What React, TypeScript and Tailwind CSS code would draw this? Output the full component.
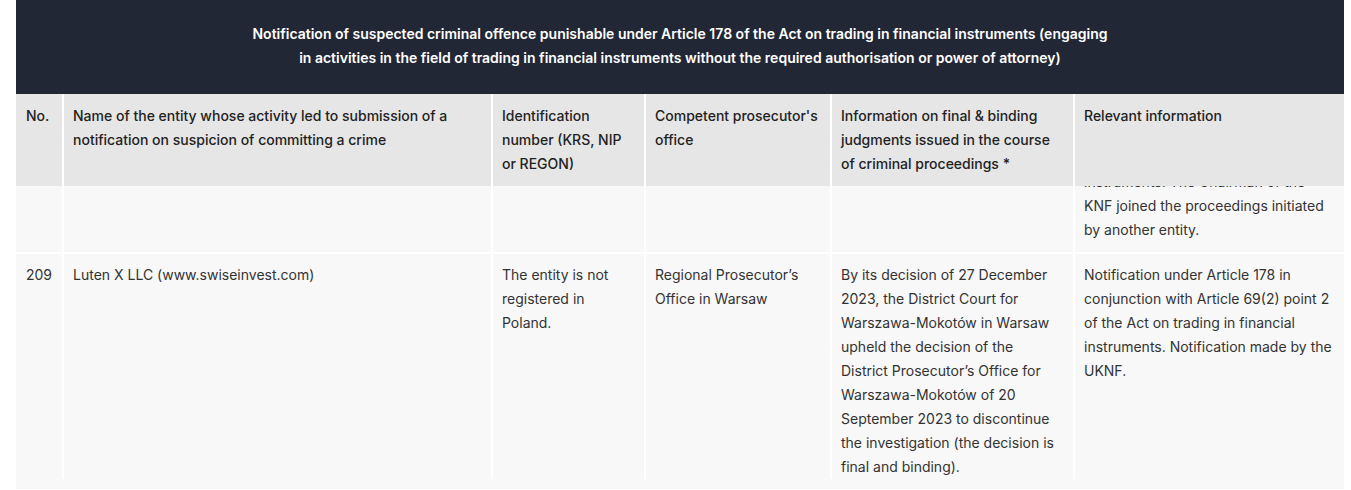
import React from "react";

const cols = ["w-[46px]", "w-[429px]", "w-[153px]", "w-[186px]", "w-[243px]", "w-[271px]"];

function Cell({ i, children, className = "" }: { i: number; children?: React.ReactNode; className?: string }) {
  return (
    <div
      className={`${cols[i]} shrink-0 ${i === 0 ? "pl-[10px]" : "border-l-2 border-white pl-[9px]"} pr-[10px] ${className}`}
    >
      {children}
    </div>
  );
}

export default function App() {
  const headers = [
    "No.",
    "Name of the entity whose activity led to submission of a notification on suspicion of committing a crime",
    "Identification number (KRS, NIP or REGON)",
    "Competent prosecutor's office",
    "Information on final & binding judgments issued in the course of criminal proceedings *",
    "Relevant information",
  ];
  return (
    <div className="min-h-screen bg-white font-['Inter','Noto_Sans',sans-serif] text-[14px] leading-[24px]">
      <div className="ml-4 w-[1328px]">
        <div className="bg-[#222736] pt-[22px] pb-[24px]">
          <p className="mx-auto max-w-[862px] text-center font-semibold text-white">
            Notification of suspected criminal offence punishable under Article 178 of the Act on trading in financial
            instruments (engaging in activities in the field of trading in financial instruments without the required
            authorisation or power of attorney)
          </p>
        </div>
        <div className="flex bg-[#e6e6e6] text-[#222]">
          {headers.map((h, i) => (
            <Cell key={i} i={i} className="pt-[10px] pb-[10px] font-medium">
              {h}
            </Cell>
          ))}
        </div>
        <div className="flex h-[66px] overflow-hidden bg-[#f8f8f8] text-[#333]">
          {[0, 1, 2, 3, 4].map((i) => (
            <Cell key={i} i={i} />
          ))}
          <Cell i={5} className="flex flex-col justify-end pb-[10px]">
            <p>
              Notification under Article 178 of the Act on trading in financial instruments. The Chairman of the KNF
              joined the proceedings initiated by another entity.
            </p>
          </Cell>
        </div>
        <div className="flex border-t-2 border-white bg-[#f8f8f8] pb-[10px] text-[#333]">
          <Cell i={0} className="pt-[9px]">209</Cell>
          <Cell i={1} className="pt-[9px]">Luten X LLC (www.swiseinvest.com)</Cell>
          <Cell i={2} className="pt-[9px]">The entity is not registered in Poland.</Cell>
          <Cell i={3} className="pt-[9px]">Regional Prosecutor’s Office in Warsaw</Cell>
          <Cell i={4} className="pt-[9px]">
            By its decision of 27 December 2023, the District Court for Warszawa-Mokotów in Warsaw upheld the decision
            of the District Prosecutor’s Office for Warszawa-Mokotów of 20 September 2023 to discontinue the
            investigation (the decision is final and binding).
          </Cell>
          <Cell i={5} className="pt-[9px]">
            Notification under Article 178 in conjunction with Article 69(2) point 2 of the Act on trading in financial
            instruments. Notification made by the UKNF.
          </Cell>
        </div>
      </div>
    </div>
  );
}
